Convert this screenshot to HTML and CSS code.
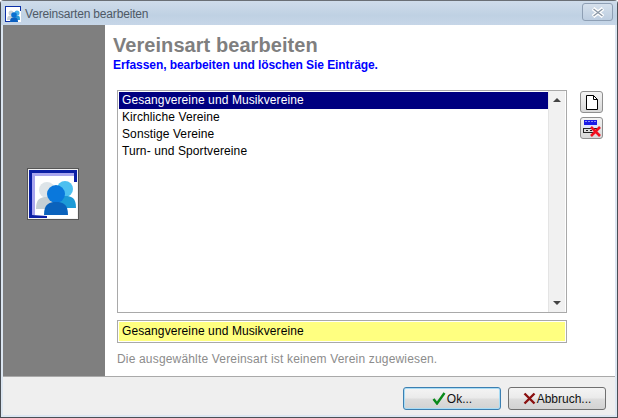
FILE: index.html
```html
<!DOCTYPE html>
<html lang="de">
<head>
<meta charset="utf-8">
<title>Vereinsarten bearbeiten</title>
<link rel="stylesheet" href="styles.css">
</head>
<body>
<div class="window">
  <div class="titlebar">
    <svg class="title-icon" width="16" height="16" viewBox="0 0 16 16">
      <rect width="16" height="16" fill="#fff"/>
      <path d="M0 0H16V5H15V1H1V15H5V16H0Z" fill="#0a2fa8"/>
      <circle cx="6" cy="7" r="2.5" fill="#c8d0d8"/>
      <path d="M2 14c0-4 2-4.500 4-4.500s3 1 3 4.500Z" fill="#c8d0d8"/>
      <circle cx="12" cy="7" r="2.500" fill="#45aee8"/>
      <path d="M9 14c0-4 1-4.500 3-4.500s3 .5 3 4.500Z" fill="#2a9ad8"/>
      <circle cx="9" cy="9" r="2.800" fill="#0a6fd0"/>
      <path d="M5 16c0-4 2-4.500 4-4.500s4 .5 4 4.500Z" fill="#0a5fc0"/>
    </svg>
    <span class="title-text">Vereinsarten bearbeiten</span>
    <div class="close-btn">
      <svg width="14" height="11" viewBox="0 0 14 11"><path d="M2 1.500L12 9.500M12 1.500L2 9.500" stroke="#fff" stroke-width="4"/><path d="M2.500 2L11.500 9M11.500 2L2.500 9" stroke="#8a97a6" stroke-width="1.300"/></svg>
    </div>
  </div>
  <div class="main">
    <aside class="side">
      <div class="side-icon">
        <svg width="48" height="48" viewBox="0 0 48 48">
          <rect width="48" height="48" fill="#fff"/>
          <path d="M0 0H48V12H45V3H3V48H0Z" fill="#0b1fa5"/>
          <path d="M3 3H45V6H6V45H3Z" fill="#a9a6ef"/>
          <path d="M3 45V48H18V46Z" fill="#0b1fa5"/>
          <circle cx="18" cy="20" r="8" fill="#dde4e8"/>
          <path d="M7 39c0-10 4-12 11-12s11 2 11 12Z" fill="#c6d0d4"/>
          <circle cx="36" cy="19" r="8" fill="#4cc0f0"/>
          <path d="M24 38c0-10 5-12 12-12s11 2 11 12Z" fill="#1c9ad6"/>
          <circle cx="27" cy="24" r="9" fill="#0a78dc"/>
          <path d="M15 45c0-11 5-13 12-13s12 2 12 13Z" fill="#0a62bc"/>
        </svg>
      </div>
    </aside>
    <section class="content">
      <h1 class="heading">Vereinsart bearbeiten</h1>
      <p class="subheading">Erfassen, bearbeiten und löschen Sie Einträge.</p>
      <div class="editor">
        <div class="fields">
          <div class="listbox">
            <ul class="items">
              <li class="item selected">Gesangvereine und Musikvereine</li>
              <li class="item">Kirchliche Vereine</li>
              <li class="item">Sonstige Vereine</li>
              <li class="item">Turn- und Sportvereine</li>
            </ul>
            <div class="scrollbar">
              <span class="arrow up"></span>
              <span class="arrow down"></span>
            </div>
          </div>
          <div class="text-field">Gesangvereine und Musikvereine</div>
          <p class="hint">Die ausgewählte Vereinsart ist keinem Verein zugewiesen.</p>
        </div>
        <div class="tools">
          <button class="tool">
            <svg width="14" height="17" viewBox="0 0 14 17"><path d="M1.500 1.500H8.500L12.500 5.500V15.500H1.500Z" fill="#fff" stroke="#000"/><path d="M8.500 1.500V5.500H12.500" fill="none" stroke="#000"/></svg>
          </button>
          <button class="tool">
            <svg width="18" height="18" viewBox="0 0 18 18">
              <rect x="1" y="1" width="13" height="5" fill="#1a1ae6"/>
              <path d="M3 2v1M6 2v1M9 2v1M12 2v1" stroke="#fff"/>
              <rect x="1" y="6" width="13" height="3" fill="#dfe3ff"/>
              <rect x=".5" y="9.500" width="13" height="4" fill="#ddd" stroke="#222"/>
              <path d="M3 11.500h2M7 11.500h2" stroke="#222"/>
              <path d="M8 8L17 17M17 8L8 17" stroke="#f0101f" stroke-width="2.600"/>
            </svg>
          </button>
        </div>
      </div>
    </section>
  </div>
  <footer class="footer">
    <button class="btn default">
      <svg width="14" height="13" viewBox="0 0 14 13"><path d="M1.500 7L5 11.500L12.500 1" fill="none" stroke="#0a8a1a" stroke-width="2.400"/></svg>
      <span>Ok...</span>
    </button>
    <button class="btn">
      <svg width="13" height="13" viewBox="0 0 13 13"><path d="M1.500 1.500L11.500 11.500M11.500 1.500L1.500 11.500" fill="none" stroke="#8a1010" stroke-width="2.400"/></svg>
      <span>Abbruch...</span>
    </button>
  </footer>
</div>
</body>
</html>
```
FILE: styles.css
```css
* { box-sizing: border-box; }
html, body { margin: 0; padding: 0; }
body {
  width: 618px;
  height: 418px;
  overflow: hidden;
  font-family: "Liberation Sans", Arial, sans-serif;
  font-size: 12px;
  color: #000;
}
.window {
  width: 618px;
  height: 418px;
  display: flex;
  flex-direction: column;
  background: #dce6f1;
  border: 1px solid #4a4f55;
  border-top-color: #6a6f75;
  border-radius: 4px 4px 0 0;
  padding: 0 2px 2px;
}
.titlebar {
  height: 24px;
  flex: none;
  display: flex;
  align-items: center;
  margin: 0 -2px;
  padding: 1px 4px 0 4px;
  background: linear-gradient(#cfdcea, #bfd1e3 60%, #c6d6e8);
}
.title-icon { flex: none; }
.title-text {
  margin-left: 4px;
  font-size: 12px;
  letter-spacing: -0.18px;
  color: #4e5966;
}
.close-btn {
  margin-left: auto;
  width: 31px;
  height: 18px;
  margin-top: -3px;
  border: 1px solid #8e9fb4;
  border-radius: 3px;
  background: linear-gradient(#d5e0ec, #bccde0);
  display: flex;
  align-items: center;
  justify-content: center;
}
.main {
  flex: 1;
  min-height: 0;
  display: flex;
  background: #fff;
}
.side {
  width: 102px;
  flex: none;
  background: #7f7f7f;
  display: flex;
  align-items: center;
  justify-content: center;
  padding-right: 2px;
  padding-bottom: 14px;
}
.side-icon {
  width: 52px;
  height: 52px;
  border: 2px solid #f2f2f2;
  outline: 1px solid #555;
  outline-offset: -1px;
  display: flex;
}
.content {
  flex: 1;
  min-width: 0;
  display: flex;
  flex-direction: column;
  padding: 9px 0 0 8px;
}
.heading {
  margin: 0;
  font-size: 20px;
  line-height: 22px;
  letter-spacing: 0.06px;
  font-weight: bold;
  color: #7f7f7f;
}
.subheading {
  margin: 2px 0 0;
  font-size: 12px;
  line-height: 15px;
  letter-spacing: -0.07px;
  font-weight: bold;
  color: #0000ff;
}
.editor {
  display: flex;
  margin-top: 17px;
  padding-left: 4px;
}
.fields { width: 450px; flex: none; }
.listbox {
  height: 223px;
  display: flex;
  border: 1px solid #a9a9a9;
  padding: 1px 1px 1px 1px;
}
.items {
  flex: 1;
  min-width: 0;
  margin: 0;
  padding: 0;
  list-style: none;
}
.item {
  height: 17px;
  line-height: 17px;
  padding-left: 3px;
  letter-spacing: 0.1px;
}
.selected {
  background: #000080;
  color: #fff;
}
.scrollbar {
  width: 17px;
  flex: none;
  margin: -1px 0;
  background: #f1f1f1;
  border-left: 1px solid #e4e4e4;
  display: flex;
  flex-direction: column;
  justify-content: space-between;
  align-items: center;
  padding: 7px 0;
}
.arrow {
  width: 0;
  height: 0;
  border-left: 4px solid transparent;
  border-right: 4px solid transparent;
}
.up { border-bottom: 4px solid #444; }
.down { border-top: 4px solid #444; }
.text-field {
  margin-top: 7px;
  height: 23px;
  line-height: 21px;
  padding-left: 4px;
  letter-spacing: 0.1px;
  border: 1px solid #a9a9a9;
  background: #ffff80;
  box-shadow: inset 0 0 0 1px #fff;
}
.hint {
  margin: 9px 0 0;
  line-height: 14px;
  color: #8c8c8c;
  letter-spacing: 0.17px;
}
.tools {
  display: flex;
  flex-direction: column;
  gap: 4px;
  margin: 1px 0 0 13px;
}
.tool {
  width: 23px;
  height: 22px;
  padding: 0;
  border: 1px solid #8f8f8f;
  border-radius: 3px;
  background: linear-gradient(#f3f3f3, #d8d8d8);
  display: flex;
  align-items: center;
  justify-content: center;
}
.footer {
  height: 39px;
  flex: none;
  display: flex;
  justify-content: flex-end;
  align-items: flex-start;
  gap: 7px;
  padding: 10px 9px 0 0;
  background: #efefef;
  border-top: 1px solid #a9a9a9;
}
.btn {
  width: 98px;
  height: 23px;
  padding: 0;
  border: 1px solid #707070;
  border-radius: 3px;
  background: linear-gradient(#f4f4f4 0%, #ebebeb 45%, #dcdcdc 55%, #d2d2d2 100%);
  display: flex;
  align-items: center;
  justify-content: center;
  gap: 1px;
  font: 12px "Liberation Sans", Arial, sans-serif;
  color: #111;
}
.default {
  border-color: #3c7fb1;
  box-shadow: inset 0 0 0 1px #a8dcf5;
}
```
